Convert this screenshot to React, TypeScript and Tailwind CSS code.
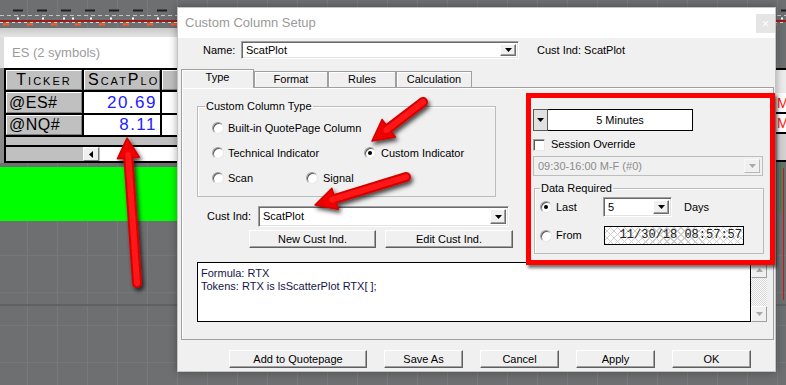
import React from "react";

function ChartBg() {
  const vx: number[] = [];
  for (let x = 27; x < 786; x += 30) vx.push(x);
  const blackDash: number[] = [];
  for (let x = 13; x < 786; x += 24) blackDash.push(x);
  const orange: number[] = [];
  for (let x = 3; x < 786; x += 24) orange.push(x);
  const dots = [17, 42, 63, 72, 90, 110, 132, 157, 200, 240, 290, 330, 380, 420, 470, 520, 560, 610, 650, 700, 750, 781];
  return (
    <svg className="absolute left-0 top-0" width="786" height="385">
      <rect width="786" height="385" fill="#6e6f71" />
      {vx.map((x) => (
        <line key={x} x1={x + 0.5} y1={0} x2={x + 0.5} y2={385} stroke="#777a7c" strokeWidth={1} />
      ))}
      {[255, 292, 325, 362].map((y) => (
        <line key={y} x1={0} y1={y + 0.5} x2={786} y2={y + 0.5} stroke="#76777a" strokeWidth={1} />
      ))}
      <line x1={0} y1={305} x2={786} y2={305} stroke="#5c5d5f" strokeWidth={1.5} />
      {blackDash.map((x) => (
        <rect key={x} x={x} y={9.5} width={10} height={2} fill="#1e1e1e" />
      ))}
      <line x1={0} y1={15.5} x2={786} y2={15.5} stroke="#c4c4c4" strokeWidth={1} strokeDasharray="4 3" />
      {dots.map((x) => (
        <rect key={x} x={x} y={17.5} width={2} height={2} fill="#ffffff" />
      ))}
      <rect x={0} y={20} width={786} height={2} fill="#9c1b1b" />
      <line x1={0} y1={22.5} x2={786} y2={22.5} stroke="#d6d6d6" strokeWidth={1} strokeDasharray="3 3" />
      {orange.map((x) => (
        <rect key={x} x={x} y={23.5} width={6} height={2} fill="#ff5a1e" />
      ))}
      <defs>
        <linearGradient id="band" x1="0" y1="0" x2="0" y2="1">
          <stop offset="0" stopColor="#c9c9c9" />
          <stop offset="1" stopColor="#e4e4e4" />
        </linearGradient>
      </defs>
      <rect x={0} y={28} width={180} height={9} fill="url(#band)" />
      <rect x={0} y={37} width={4} height={31} fill="#dedede" />
      <rect x={0} y={68} width={4} height={95} fill="#8a8a8a" />
      <rect x={0} y={167} width={180} height={54} fill="#00ff00" />
      <line x1={780.5} y1={163} x2={780.5} y2={211} stroke="#1d9a1d" strokeWidth={1} />
      <line x1={783.5} y1={168} x2={783.5} y2={300} stroke="#c81818" strokeWidth={1} />
    </svg>
  );
}

function HeadCell({ children, className = "" }: { children?: React.ReactNode; className?: string }) {
  return (
    <div
      className={`bg-[#c0c0c0] border border-t-white border-l-white border-r-[#808080] border-b-[#808080] flex items-center overflow-hidden whitespace-nowrap text-[16px] leading-[18px] [font-variant-caps:small-caps] tracking-[2px] ${className}`}
    >
      {children}
    </div>
  );
}

function TRow({ sym, val, h }: { sym: string; val: string; h: string }) {
  return (
    <div className={`grid grid-cols-[76px_76px_1fr] gap-x-[2px] ${h}`}>
      <div className="bg-[#c0c0c0] border border-t-white border-l-white border-r-[#808080] border-b-[#808080] flex items-center pl-[2px] text-[16px] leading-[18px] tracking-[0.5px] overflow-hidden whitespace-nowrap">
        {sym}
      </div>
      <div className="bg-white flex items-center justify-end pr-[3px] text-[17px] leading-[18px] tracking-[1.5px] text-[#2222ff]">
        {val}
      </div>
      <div className="bg-white" />
    </div>
  );
}

function EsWindow() {
  return (
    <div className="absolute left-[4px] top-[37px] w-[200px] flex flex-col">
      <div className="h-[31px] bg-white flex items-center pl-[8px] text-[13px] leading-[15px] text-[#9b9b9b]">
        ES (2 symbols)
      </div>
      <div className="bg-black p-[2px] flex flex-col gap-[2px]">
        <div className="grid grid-cols-[76px_76px_1fr] gap-x-[2px] h-[20px]">
          <HeadCell className="justify-center">Ticker</HeadCell>
          <HeadCell className="pl-[3px]">ScatPlot</HeadCell>
          <HeadCell />
        </div>
        <TRow sym="@ES#" val="20.69" h="h-[21px]" />
        <TRow sym="@NQ#" val="8.11" h="h-[20px]" />
        <div className="h-[8px] bg-[#c0c0c0]" />
        <div className="h-[14px] bg-[#c0c0c0] flex">
          <div className="w-[77px]" />
          <div className="w-[16px] bg-[#f0f0f0] border border-t-white border-l-white border-r-[#808080] border-b-[#808080] flex items-center justify-center">
            <svg width="4" height="7" viewBox="0 0 4 7">
              <path d="M4 0V7L0 3.5Z" fill="#000" />
            </svg>
          </div>
          <div className="flex-1 bg-white ml-[1px]" />
        </div>
      </div>
    </div>
  );
}

function RightWindow() {
  return (
    <div className="absolute left-[760px] top-[68px] w-[40px] flex flex-col">
      <div className="h-[2px] bg-black" />
      <div className="h-[23px] bg-[#ececec]" />
      <div className="h-[19px] bg-white flex items-center pl-[17px] text-[14px] leading-[14px] text-[#ff1010]">MI</div>
      <div className="h-[2px] bg-black" />
      <div className="h-[18px] bg-white flex items-center pl-[17px] text-[14px] leading-[14px] text-[#ff1010]">MI</div>
      <div className="h-[2px] bg-black" />
      <div className="h-[26px] bg-[#d2d2d2]" />
      <div className="h-[2px] bg-black" />
    </div>
  );
}

function DownTri({ color = "#000" }: { color?: string }) {
  return (
    <svg width="7" height="4" viewBox="0 0 7 4">
      <path d="M0 0H7L3.5 4Z" fill={color} />
    </svg>
  );
}

function DropBtn({ disabled = false }: { disabled?: boolean }) {
  return (
    <div
      className={`w-[16px] h-full flex items-center justify-center bg-[#f0f0f0] border ${
        disabled
          ? "border-t-[#f8f8f8] border-l-[#f8f8f8] border-r-[#b8b8b8] border-b-[#b8b8b8]"
          : "border-t-white border-l-white border-r-[#6d6d6d] border-b-[#6d6d6d] shadow-[inset_-1px_-1px_0_#a0a0a0]"
      }`}
    >
      <DownTri color={disabled ? "#a8a8a8" : "#000"} />
    </div>
  );
}

function Combo({ w, h, text }: { w: string; h: string; text: string }) {
  return (
    <div
      className={`${w} ${h} bg-white flex p-[2px] border border-t-[#a0a0a0] border-l-[#a0a0a0] border-r-white border-b-white shadow-[inset_1px_1px_0_#696969,inset_-1px_-1px_0_#e3e3e3]`}
    >
      <div className="flex-1 flex items-center pl-[2px]">{text}</div>
      <DropBtn />
    </div>
  );
}

function Radio({ checked = false }: { checked?: boolean }) {
  return (
    <span className="shrink-0 w-[12px] h-[12px] rounded-full bg-white flex items-center justify-center border border-t-[#a0a0a0] border-l-[#a0a0a0] border-r-[#e8e8e8] border-b-[#e8e8e8] shadow-[inset_1px_1px_0_#5a5a5a]">
      {checked && <span className="w-[4px] h-[4px] rounded-full bg-black" />}
    </span>
  );
}

function Btn({ w, children }: { w: string; children: React.ReactNode }) {
  return (
    <div
      className={`${w} h-[18px] flex items-center justify-center bg-[#f0f0f0] border border-t-white border-l-white border-r-[#5f5f5f] border-b-[#5f5f5f] shadow-[inset_-1px_-1px_0_#a0a0a0]`}
    >
      {children}
    </div>
  );
}

function Tab({ sel = false, w, children }: { sel?: boolean; w: string; children: React.ReactNode }) {
  return (
    <div
      className={`${w} ${
        sel ? "h-[19px] mb-[-1px] pb-[3px]" : "h-[16px]"
      } bg-[#f0f0f0] border border-b-0 border-[#a0a0a0] shadow-[inset_1px_1px_0_#ffffff] flex items-center justify-center`}
    >
      {children}
    </div>
  );
}

function ScrollV() {
  return (
    <div className="w-[16px] flex flex-col">
      <div className="h-[16px] bg-[#f0f0f0] border border-t-white border-l-white border-r-[#a0a0a0] border-b-[#a0a0a0] flex items-center justify-center">
        <svg width="7" height="4" viewBox="0 0 7 4">
          <path d="M0 4H7L3.5 0Z" fill="#a8a8a8" />
        </svg>
      </div>
      <div className="flex-1 bg-[image:repeating-conic-gradient(#d6d6d6_0_25%,#ffffff_0_50%)] bg-[length:2px_2px]" />
      <div className="h-[16px] bg-[#f0f0f0] border border-t-white border-l-white border-r-[#a0a0a0] border-b-[#a0a0a0] flex items-center justify-center">
        <DownTri color="#a8a8a8" />
      </div>
    </div>
  );
}

function Dialog() {
  return (
    <div className="absolute left-[177px] top-[7px] w-[599px] h-[365px] bg-[#f0f0f0] border border-[#c4c4c4] flex flex-col shadow-[0_0_8px_rgba(0,0,0,0.35)]">
      <div className="h-[30px] shrink-0 bg-white flex justify-between items-start">
        <span className="pl-[7px] pt-[7px] text-[13px] leading-[15px] text-[#9a9a9a]">Custom Column Setup</span>
        <span className="mt-[6px] w-[19px] h-[19px] bg-[#e5e5e5] flex items-center justify-center text-[13px] leading-none text-white">
          ×
        </span>
      </div>

      <div className="mt-[3px] h-[18px] flex items-center shrink-0">
        <span className="pl-[25px] w-[63px]">Name:</span>
        <Combo w="w-[278px]" h="h-[18px]" text="ScatPlot" />
        <span className="ml-[18px]">Cust Ind: ScatPlot</span>
      </div>

      <div className="mt-[10px] h-[18px] flex items-end pl-[3px] shrink-0 relative z-10">
        <Tab sel w="w-[73px]">Type</Tab>
        <Tab w="w-[74px]">Format</Tab>
        <Tab w="w-[68px]">Rules</Tab>
        <Tab w="w-[76px]">Calculation</Tab>
      </div>

      <div className="ml-[3px] w-[593px] h-[253px] shrink-0 border border-[#a0a0a0] shadow-[inset_1px_1px_0_#ffffff] flex flex-col">
        <div className="flex">
          {/* left column */}
          <div className="w-[351px] pl-[15px] pt-[12px] flex flex-col">
            <fieldset className="w-[299px] h-[97px] border border-[#bcbcbc] shadow-[inset_1px_1px_0_#ffffff]">
              <legend className="ml-[7px] px-[1px]">Custom Column Type</legend>
              <div className="pt-[7px] pl-[14px] flex flex-col gap-[9px]">
                <div className="h-[16px] flex items-center">
                  <Radio />
                  <span className="ml-[4px]">Built-in QuotePage Column</span>
                </div>
                <div className="h-[16px] flex items-center">
                  <div className="w-[152px] flex items-center">
                    <Radio />
                    <span className="ml-[4px]">Technical Indicator</span>
                  </div>
                  <Radio checked />
                  <span className="ml-[5px]">Custom Indicator</span>
                </div>
                <div className="h-[16px] flex items-center">
                  <div className="w-[94px] flex items-center">
                    <Radio />
                    <span className="ml-[4px]">Scan</span>
                  </div>
                  <Radio />
                  <span className="ml-[5px]">Signal</span>
                </div>
              </div>
            </fieldset>

            <div className="mt-[9px] h-[21px] flex items-center pl-[10px]">
              <span className="w-[51px]">Cust Ind:</span>
              <Combo w="w-[251px]" h="h-[21px]" text="ScatPlot" />
            </div>

            <div className="mt-[3px] flex gap-[9px] pl-[52px]">
              <Btn w="w-[127px]">New Cust Ind.</Btn>
              <Btn w="w-[128px]">Edit Cust Ind.</Btn>
            </div>
          </div>

          {/* right column */}
          <div className="w-[232px] pt-[21px] flex flex-col">
            <div className="h-[22px] flex">
              <div className="w-[15px] bg-[#e1e1e1] border border-[#5a5a5a] flex items-center justify-center">
                <DownTri />
              </div>
              <div className="w-[145px] bg-white border border-black border-l-0 flex items-center justify-center">
                5 Minutes
              </div>
            </div>

            <div className="mt-[7px] h-[13px] flex items-center">
              <span className="w-[12px] h-[12px] bg-white border border-t-[#a0a0a0] border-l-[#a0a0a0] border-r-[#e8e8e8] border-b-[#e8e8e8] shadow-[inset_1px_1px_0_#5a5a5a]" />
              <span className="ml-[6px]">Session Override</span>
            </div>

            <div className="mt-[5px] h-[20px] w-[230px] flex p-[2px] bg-[#f0f0f0] border border-[#bdbdbd]">
              <div className="flex-1 flex items-center pl-[2px] text-[#8c8c8c]">09:30-16:00 M-F (#0)</div>
              <DropBtn disabled />
            </div>

            <fieldset className="mt-[6px] ml-[1px] w-[230px] h-[72px] border border-[#bcbcbc] shadow-[inset_1px_1px_0_#ffffff]">
              <legend className="ml-[5px] px-[1px]">Data Required</legend>
              <div className="pt-[2px] pl-[5px] flex flex-col gap-[9px]">
                <div className="h-[20px] flex items-center">
                  <div className="w-[63px] flex items-center">
                    <Radio checked />
                    <span className="ml-[4px]">Last</span>
                  </div>
                  <Combo w="w-[69px]" h="h-[20px]" text="5" />
                  <span className="ml-[12px]">Days</span>
                </div>
                <div className="h-[19px] flex items-center">
                  <div className="w-[64px] flex items-center">
                    <Radio />
                    <span className="ml-[4px]">From</span>
                  </div>
                  <div className="w-[140px] h-[19px] border border-black flex items-center justify-end pr-[1px] font-['Liberation_Mono',monospace] text-[12px] text-[#222] bg-[image:repeating-linear-gradient(45deg,#cfcfcf_0px,#cfcfcf_1px,transparent_1px,transparent_5px),repeating-linear-gradient(-45deg,#cfcfcf_0px,#cfcfcf_1px,#ffffff_1px,#ffffff_5px)]">
                    11/30/18 08:57:57
                  </div>
                </div>
              </div>
            </fieldset>
          </div>
        </div>

        <div className="mt-[8px] ml-[15px] w-[570px] h-[60px] flex">
          <div className="flex-1 bg-white border border-black pl-[3px] pt-[4px] text-[#14144a]">
            <div>Formula: RTX</div>
            <div>Tokens: RTX is lsScatterPlot RTX[ ];</div>
          </div>
          <ScrollV />
        </div>
      </div>

      <div className="mt-[10px] flex gap-[17px] pl-[51px]">
        <Btn w="w-[138px]">Add to Quotepage</Btn>
        <Btn w="w-[79px]">Save As</Btn>
        <Btn w="w-[79px]">Cancel</Btn>
        <Btn w="w-[79px]">Apply</Btn>
        <Btn w="w-[79px]">OK</Btn>
      </div>
    </div>
  );
}

function Arrow({ x1, y1, x2, y2, hl = 21, hw = 11 }: { x1: number; y1: number; x2: number; y2: number; hl?: number; hw?: number }) {
  const dx = x2 - x1;
  const dy = y2 - y1;
  const len = Math.hypot(dx, dy);
  const ux = dx / len;
  const uy = dy / len;
  const nx = -uy;
  const ny = ux;
  const bx = x2 - ux * hl;
  const by = y2 - uy * hl;
  const pts = `${x2},${y2} ${bx + nx * hw},${by + ny * hw} ${bx - nx * hw},${by - ny * hw}`;
  return (
    <g filter="url(#ash)">
      <line x1={x1} y1={y1} x2={bx + ux * 3} y2={by + uy * 3} stroke="#d40000" strokeWidth={10} strokeLinecap="round" />
      <polygon points={pts} fill="#ee0000" stroke="#d40000" strokeWidth={1.5} strokeLinejoin="round" />
      <line x1={x1} y1={y1} x2={bx + ux * 3} y2={by + uy * 3} stroke="#ff1414" strokeWidth={6} strokeLinecap="round" />
    </g>
  );
}

function Annotations() {
  return (
    <>
      <div className="absolute left-[526px] top-[93px] w-[249px] h-[172px] border-[5px] border-[#ff0000] shadow-[2px_3px_3px_rgba(0,0,0,0.55)]" />
      <svg className="absolute left-0 top-0 pointer-events-none" width="786" height="385">
        <defs>
          <filter id="ash" x="-50%" y="-50%" width="200%" height="200%">
            <feDropShadow dx="2" dy="3" stdDeviation="2" floodColor="#000" floodOpacity="0.7" />
          </filter>
        </defs>
        <Arrow x1={423} y1={102} x2={372} y2={141} />
        <Arrow x1={406} y1={177} x2={315} y2={205} />
        <Arrow x1={137} y1={283} x2={127} y2={138} hl={20} hw={11} />
      </svg>
    </>
  );
}

export default function App() {
  return (
    <div className="relative w-[786px] h-[385px] overflow-hidden bg-[#6e6f71] font-['Liberation_Sans',Arial,sans-serif] text-[11px] leading-[13px] text-black">
      <ChartBg />
      <EsWindow />
      <RightWindow />
      <Dialog />
      <Annotations />
    </div>
  );
}
